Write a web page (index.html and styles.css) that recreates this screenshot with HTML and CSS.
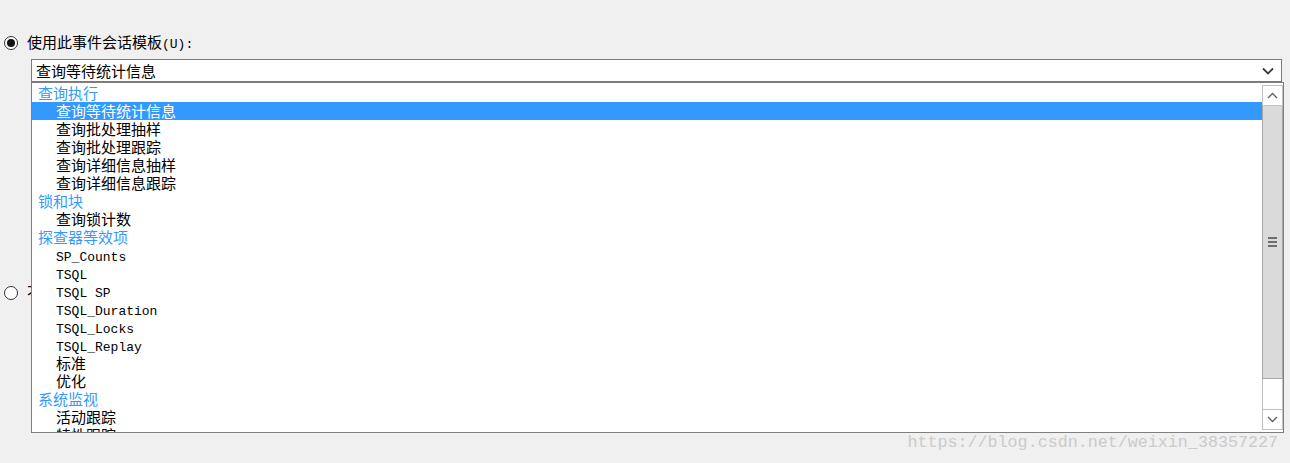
FILE: index.html
```html
<!DOCTYPE html>
<html lang="zh-CN">
<head>
    <meta charset="UTF-8">
    <title>新建会话</title>
    <link rel="stylesheet" href="styles.css">
</head>
<body>
    <div class="page">
        <div class="option">
            <span class="radio checked"></span>
            <label>使用此事件会话模板<span class="mono">(U):</span></label>
        </div>

        <div class="combo">
            <span class="combo-text">查询等待统计信息</span>
            <svg class="combo-arrow" width="12" height="8" viewBox="0 0 12 8">
                <path d="M1 1.5 L6 6.5 L11 1.5" fill="none" stroke="#3c3c3c" stroke-width="1.8"/>
            </svg>
        </div>

        <div class="option option-second">
            <span class="radio"></span>
            <label>不使用模板<span class="mono">(N)</span></label>
        </div>

        <!-- open dropdown list of the combo -->
        <div class="dropdown">
            <ul class="items">
                <li class="group">查询执行</li>
                <li class="item selected">查询等待统计信息</li>
                <li class="item">查询批处理抽样</li>
                <li class="item">查询批处理跟踪</li>
                <li class="item">查询详细信息抽样</li>
                <li class="item">查询详细信息跟踪</li>
                <li class="group">锁和块</li>
                <li class="item">查询锁计数</li>
                <li class="group">探查器等效项</li>
                <li class="item"><span class="mono">SP_Counts</span></li>
                <li class="item"><span class="mono">TSQL</span></li>
                <li class="item"><span class="mono">TSQL SP</span></li>
                <li class="item"><span class="mono">TSQL_Duration</span></li>
                <li class="item"><span class="mono">TSQL_Locks</span></li>
                <li class="item"><span class="mono">TSQL_Replay</span></li>
                <li class="item">标准</li>
                <li class="item">优化</li>
                <li class="group">系统监视</li>
                <li class="item">活动跟踪</li>
                <li class="item">特性跟踪</li>
            </ul>
            <div class="scrollbar">
                <div class="sb-btn">
                    <svg width="11" height="7" viewBox="0 0 11 7">
                        <path d="M1 6 L5.5 1.5 L10 6" fill="none" stroke="#606060" stroke-width="1.3"/>
                    </svg>
                </div>
                <div class="sb-thumb">
                    <span class="grip"></span>
                    <span class="grip"></span>
                    <span class="grip"></span>
                </div>
                <div class="sb-track"></div>
                <div class="sb-btn">
                    <svg width="11" height="7" viewBox="0 0 11 7">
                        <path d="M1 1 L5.5 5.5 L10 1" fill="none" stroke="#606060" stroke-width="1.3"/>
                    </svg>
                </div>
            </div>
        </div>

        <div class="watermark">https://blog.csdn.net/weixin_38357227</div>
    </div>
</body>
</html>
```

FILE: styles.css
```css
body {
    margin: 0;
    background-color: #f0f0f0;
    font-family: "Noto Sans CJK SC", sans-serif;
    font-size: 15px;
    color: #000;
    overflow: hidden;
}

.page {
    position: relative;
    height: 463px;
    padding: 34px 0 0 4px;
    box-sizing: border-box;
}

.mono {
    font-family: "Liberation Mono", monospace;
    font-size: 13px;
}

.option {
    display: flex;
    align-items: center;
    gap: 9px;
    height: 18px;
    line-height: 18px;
}

.option-second {
    margin-top: 202px;
}

.radio {
    width: 14px;
    height: 14px;
    border: 1px solid #333;
    border-radius: 50%;
    background-color: #fff;
    box-sizing: border-box;
    display: flex;
    align-items: center;
    justify-content: center;
}

.radio.checked::after {
    content: "";
    width: 8px;
    height: 8px;
    border-radius: 50%;
    background-color: #111;
}

.combo {
    margin: 7px 0 0 27px;
    width: 1251px;
    height: 23px;
    border: 1px solid #7a7a7a;
    background-color: #fff;
    box-sizing: border-box;
    display: flex;
    align-items: center;
    justify-content: space-between;
    padding: 0 7px 0 4px;
}

.combo-text {
    line-height: 20px;
}

.dropdown {
    position: absolute;
    top: 82px;
    left: 31px;
    width: 1253px;
    height: 351px;
    border: 1px solid #7f7f7f;
    background-color: #fff;
    box-sizing: border-box;
    display: flex;
    overflow: hidden;
}

.items {
    flex: 1;
    list-style: none;
    margin: 0;
    padding: 1px 0 0 0;
}

.items li {
    height: 18px;
    line-height: 18px;
    white-space: nowrap;
}

.group {
    color: #3399ff;
    padding-left: 6px;
}

.item {
    padding-left: 24px;
}

.item.selected {
    background-color: #3399ff;
    color: #fff;
}

.scrollbar {
    width: 21px;
    padding: 2px 0;
    display: flex;
    flex-direction: column;
    box-sizing: border-box;
}

.sb-btn {
    height: 21px;
    border: 1px solid #c2c2c2;
    background-color: #fff;
    box-sizing: border-box;
    display: flex;
    align-items: center;
    justify-content: center;
}

.sb-thumb {
    height: 273px;
    background-color: #dadada;
    border: 1px solid #a8a8a8;
    border-top: none;
    box-sizing: border-box;
    display: flex;
    flex-direction: column;
    align-items: center;
    justify-content: center;
    gap: 2px;
}

.grip {
    width: 9px;
    height: 2px;
    background-color: #6e6e6e;
}

.sb-track {
    flex: 1;
    background-color: #fff;
    border-left: 1px solid #c2c2c2;
    border-right: 1px solid #c2c2c2;
}

.watermark {
    position: absolute;
    right: 12px;
    bottom: 11px;
    font-family: "Liberation Mono", monospace;
    font-size: 16.7px;
    color: #cbcbcb;
}
```
